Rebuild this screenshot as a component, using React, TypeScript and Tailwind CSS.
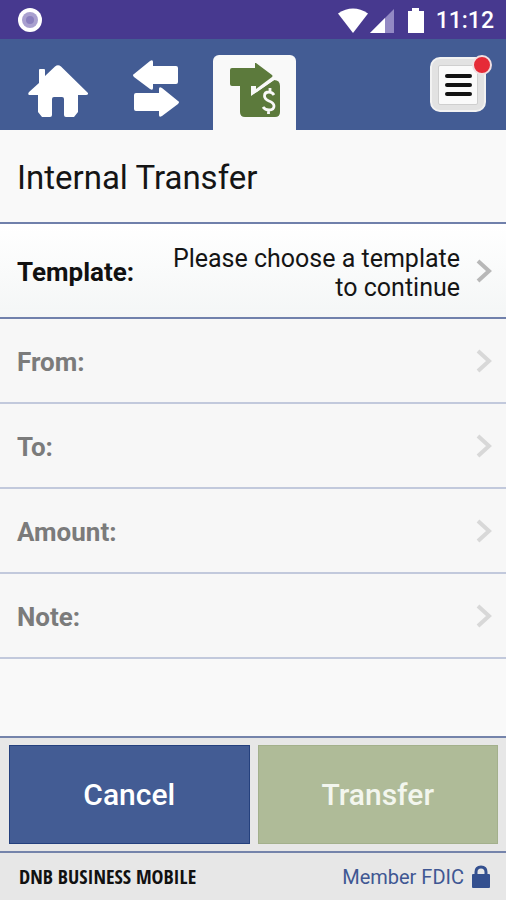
const steps = ['From:', 'To:', 'Amount:', 'Note:']

function Chevron({ color }: { color: string }) {
  return (
    <svg width="16" height="24" viewBox="0 0 16 24" fill="none" className="shrink-0" aria-hidden="true">
      <path d="M2 2 L13 12 L2 22" stroke={color} strokeWidth="4" />
    </svg>
  )
}

function StatusBar() {
  return (
    <div className="flex h-[39px] items-center bg-[#47398f] pr-3 pl-[18px] text-white">
      <svg width="24" height="24" viewBox="0 0 24 24" aria-hidden="true">
        <circle cx="12" cy="12" r="12" fill="#fff" />
        <circle cx="12" cy="12" r="8" fill="#a9a0cf" />
        <circle cx="12" cy="12" r="4" fill="#8a7fbd" />
      </svg>
      <div className="ml-auto flex items-center pt-0.5">
        <svg width="86" height="25" viewBox="0 0 86 25" aria-hidden="true">
          <path d="M0 5.500 Q15 -4.500 30 5.500 L15 25 Z" fill="#fff" />
          <path d="M32 25 L56 1 V25 Z" fill="#9389c4" />
          <path d="M32 25 L47 10 V25 Z" fill="#fff" />
          <path d="M70 3 H74 V0 H81 V3 H86 V25 H70 Z" fill="#fff" />
        </svg>
        <span className="ml-3 text-[23px] leading-6 font-medium">11:12</span>
      </div>
    </div>
  )
}

function HomeIcon() {
  return (
    <svg width="60" height="53" viewBox="0 0 60 53" fill="#fff" aria-hidden="true">
      <path d="M27 1.500 Q30 -1 33 1.500 L60 28 Q60.500 30 58 30 H50 V47 L46 52 H38 Q36 52 36 50 V34 Q36 32 34 32 H26 Q24 32 24 34 V50 Q24 52 22 52 H14 L10 47 V30 H1 Q-0.500 29 1 27 L11 18 V5 Q11 4 12 4 H16 Q17 4 17 5 V11 Z" />
    </svg>
  )
}

function ExchangeIcon() {
  return (
    <svg width="46" height="58" viewBox="0 0 46 58" fill="#fff" aria-hidden="true">
      <path d="M1 14 L17 1 Q20 -1 20 2 V6 H43 Q45 6 45 8 V22 Q45 24 43 24 H20 V28 Q20 31 17 29 L1 17 Q-1 15 1 14 Z" />
      <path d="M45 41 L29 28 Q26 26 26 29 V33 H3 Q1 33 1 35 V49 Q1 51 3 51 H26 V55 Q26 58 29 56 L45 44 Q47 42 45 41 Z" />
    </svg>
  )
}

function TransferIcon() {
  return (
    <svg width="50" height="55" viewBox="0 0 50 55" aria-hidden="true">
      <path d="M10 23 H21 V32 L27 29 L44 17 Q50 17 50 23 V49 Q50 54 45 54 H15 Q10 54 10 49 Z" fill="#5c7a3c" />
      <path d="M2 5 H25 V0 Q25 -1 26 0 L42 12 Q43 13 42 14 L26 26 V23 H2 Q0 23 0 21 V7 Q0 5 2 5 Z" fill="#5c7a3c" />
      <path d="M22 23 V31 L44 16" fill="none" stroke="#f9f9f9" strokeWidth="2" />
      <path
        d="M44 32 Q42 29 39 29 Q34.500 29 34.500 33 Q34.500 36 39 38 Q44 40 44 43 Q44 47 39 47 Q35 47 33 44 M40 25 V29 M38.500 47 V51"
        fill="none"
        stroke="#f9f9f9"
        strokeWidth="2.800"
      />
    </svg>
  )
}

function NavBar() {
  return (
    <nav className="flex h-[91px] items-end bg-[#435c94] pr-5">
      <button aria-label="Home" className="mb-3 ml-7">
        <HomeIcon />
      </button>
      <button aria-label="Transfers" className="mb-3 ml-[45px]">
        <ExchangeIcon />
      </button>
      <button aria-label="Internal transfer" className="ml-[34px] flex h-[75px] w-[83px] justify-center rounded-t-md bg-[#f9f9f9] pt-2">
        <TransferIcon />
      </button>
      <button
        aria-label="Menu"
        className="relative mb-[18px] ml-auto flex h-[55px] w-14 items-center justify-center rounded-[10px] border-2 border-[#f2f2f2] bg-[#e2e2e2]"
      >
        <span className="flex h-10 w-10 flex-col items-center justify-center gap-[5px] rounded-xs border border-[#cfcfcf] bg-[#fafafa]">
          <span className="h-1 w-[27px] rounded-xs bg-[#111]" />
          <span className="h-1 w-[27px] rounded-xs bg-[#111]" />
          <span className="h-1 w-[27px] rounded-xs bg-[#111]" />
        </span>
        <span className="absolute -top-1 -right-2 h-5 w-5 rounded-full border-2 border-[#f0dfe2] bg-[#e62b37]" />
      </button>
    </nav>
  )
}

export default function App() {
  return (
    <div className="flex min-h-screen flex-col bg-[#f9f9f9] font-[Roboto,sans-serif] text-[#151515]">
      <StatusBar />
      <NavBar />

      <main className="flex grow flex-col">
        <h1 className="px-[17px] pt-[30px] pb-[26px] text-[33px] leading-9">Internal Transfer</h1>

        <button className="flex h-[97px] items-center border-y-2 border-[#7080ab] bg-linear-to-b from-white to-[#f4f6f6] pr-3.5 pl-[17px]">
          <span className="pt-1 text-[26px] leading-[29px] font-bold text-[#111]">Template:</span>
          <span className="ml-auto max-w-[300px] pt-1 text-right text-[25px] leading-[29px]">
            Please choose a template to continue
          </span>
          <span className="ml-4">
            <Chevron color="#b8b8b8" />
          </span>
        </button>

        {steps.map((label) => (
          <button
            key={label}
            disabled
            className="flex h-[85px] items-center justify-between border-b-2 border-[#c2c9dc] bg-[#f7f7f7] pr-3.5 pl-[17px]"
          >
            <span className="pt-1 text-[26px] leading-[29px] font-bold text-[#7b7b7b]">{label}</span>
            <Chevron color="#d8d8d8" />
          </button>
        ))}
      </main>

      <div className="flex gap-2 border-y-2 border-[#7584ab] bg-[#e7e7e7] py-[7px] pr-2 pl-[9px] text-3xl font-medium text-white">
        <button className="h-[99px] flex-1 border border-[#24407d] bg-[#435c94]">Cancel</button>
        <button disabled className="h-[99px] flex-1 border border-[#a3b08c] bg-[#afbb98] text-[#f3f6ee]">
          Transfer
        </button>
      </div>

      <footer className="flex h-[47px] items-center bg-[#e7e7e7] pr-4 pl-[19px]">
        <span className="font-['Open_Sans_Condensed','Roboto_Condensed','Liberation_Sans_Narrow',sans-serif] text-xl leading-6 font-bold text-[#111]">
          DNB BUSINESS MOBILE
        </span>
        <span className="ml-auto text-xl text-[#3f5793]">Member FDIC</span>
        <svg width="18" height="23" viewBox="0 0 18 23" className="ml-2" aria-hidden="true">
          <path d="M4 11 V7 Q4 2 9 2 Q14 2 14 7 V11" fill="none" stroke="#34508f" strokeWidth="3" />
          <rect y="9" width="18" height="14" rx="1" fill="#34508f" />
        </svg>
      </footer>
    </div>
  )
}
